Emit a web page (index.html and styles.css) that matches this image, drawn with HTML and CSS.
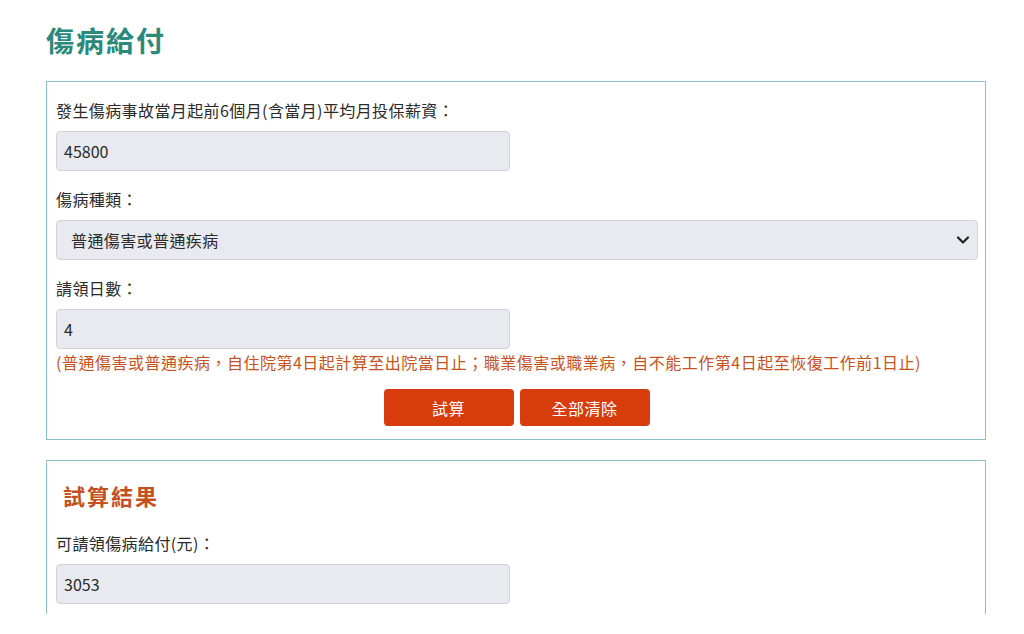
FILE: index.html
```html
<!DOCTYPE html>
<html lang="zh-Hant">
<head>
<meta charset="utf-8">
<title>傷病給付</title>
<link rel="stylesheet" href="styles.css">
</head>
<body>
<div class="page">
  <h2 class="page-title">傷病給付</h2>
  <section class="card">
    <div class="field">
      <label class="label">發生傷病事故當月起前6個月(含當月)平均月投保薪資：</label>
      <input class="input half" type="text" value="45800">
    </div>
    <div class="field">
      <label class="label">傷病種類：</label>
      <div class="select-wrap">
        <select class="input select">
          <option>普通傷害或普通疾病</option>
        </select>
        <svg class="chev" width="14" height="10" viewBox="0 0 14 10"><path d="M2 2.5 L7 7.5 L12 2.5" fill="none" stroke="#222" stroke-width="2.2" stroke-linecap="round" stroke-linejoin="round"/></svg>
      </div>
    </div>
    <div class="field last">
      <label class="label">請領日數：</label>
      <input class="input half" type="text" value="4">
      <div class="note">(普通傷害或普通疾病，自住院第4日起計算至出院當日止；職業傷害或職業病，自不能工作第4日起至恢復工作前1日止)</div>
    </div>
    <div class="buttons">
      <button class="btn">試算</button>
      <button class="btn">全部清除</button>
    </div>
  </section>
  <section class="card result">
    <h3 class="result-title">試算結果</h3>
    <div class="field">
      <label class="label">可請領傷病給付(元)：</label>
      <input class="input half" type="text" value="3053">
    </div>
  </section>
</div>
</body>
</html>
```

FILE: styles.css
```css
html, body {
  margin: 0;
  padding: 0;
  background: #ffffff;
}
body {
  font-family: "Noto Sans CJK TC", "Noto Sans", sans-serif;
  color: #2a2a2a;
  font-size: 16px;
  line-height: 24px;
}
.page {
  margin-left: 46px;
  width: 940px;
}
.page-title {
  margin: 0;
  padding-top: 21px;
  height: 81px;
  box-sizing: border-box;
  font-size: 28px;
  line-height: 38px;
  font-weight: 700;
  letter-spacing: 2px;
  color: #2b8a7b;
}
.card {
  border: 1px solid #8dbfcb;
  padding: 16px 8px 13px 9px;
  box-sizing: border-box;
}
.result {
  margin-top: 20px;
  padding-top: 19px;
  height: 154px;
  border-bottom: none;
  overflow: hidden;
}
.field {
  display: flex;
  flex-direction: column;
  align-items: flex-start;
  margin-bottom: 16px;
}
.field.last {
  margin-bottom: 15px;
}
.label {
  display: block;
  margin-bottom: 9px;
  letter-spacing: 0.4px;
}
.input {
  font-family: "Noto Sans CJK TC", "Noto Sans", sans-serif;
  font-size: 16px;
  color: #2a2a2a;
  height: 40px;
  box-sizing: border-box;
  background: #e8eaef;
  border: 1px solid #cfd4da;
  border-radius: 4px;
  padding: 0 7px;
  margin: 0;
  outline: none;
}
.half {
  width: 454px;
}
.select-wrap {
  position: relative;
  width: 922px;
}
.select {
  width: 100%;
  appearance: none;
  -webkit-appearance: none;
  padding-left: 14px;
  letter-spacing: 0.4px;
}
.chev {
  position: absolute;
  right: 8px;
  top: 15px;
}
.note {
  color: #c4531f;
  margin-top: 1px;
  white-space: nowrap;
  letter-spacing: 0.5px;
}
.buttons {
  display: flex;
  justify-content: center;
  gap: 6px;
}
.btn {
  width: 130px;
  height: 37px;
  border: none;
  border-radius: 4px;
  background: #d73d0c;
  color: #fff;
  font-family: "Noto Sans CJK TC", "Noto Sans", sans-serif;
  font-size: 16px;
  letter-spacing: 0.5px;
  cursor: pointer;
}
.result-title {
  margin: 0 0 21px 7px;
  font-size: 22px;
  line-height: 30px;
  font-weight: 700;
  letter-spacing: 2px;
  color: #c4501f;
}
```
